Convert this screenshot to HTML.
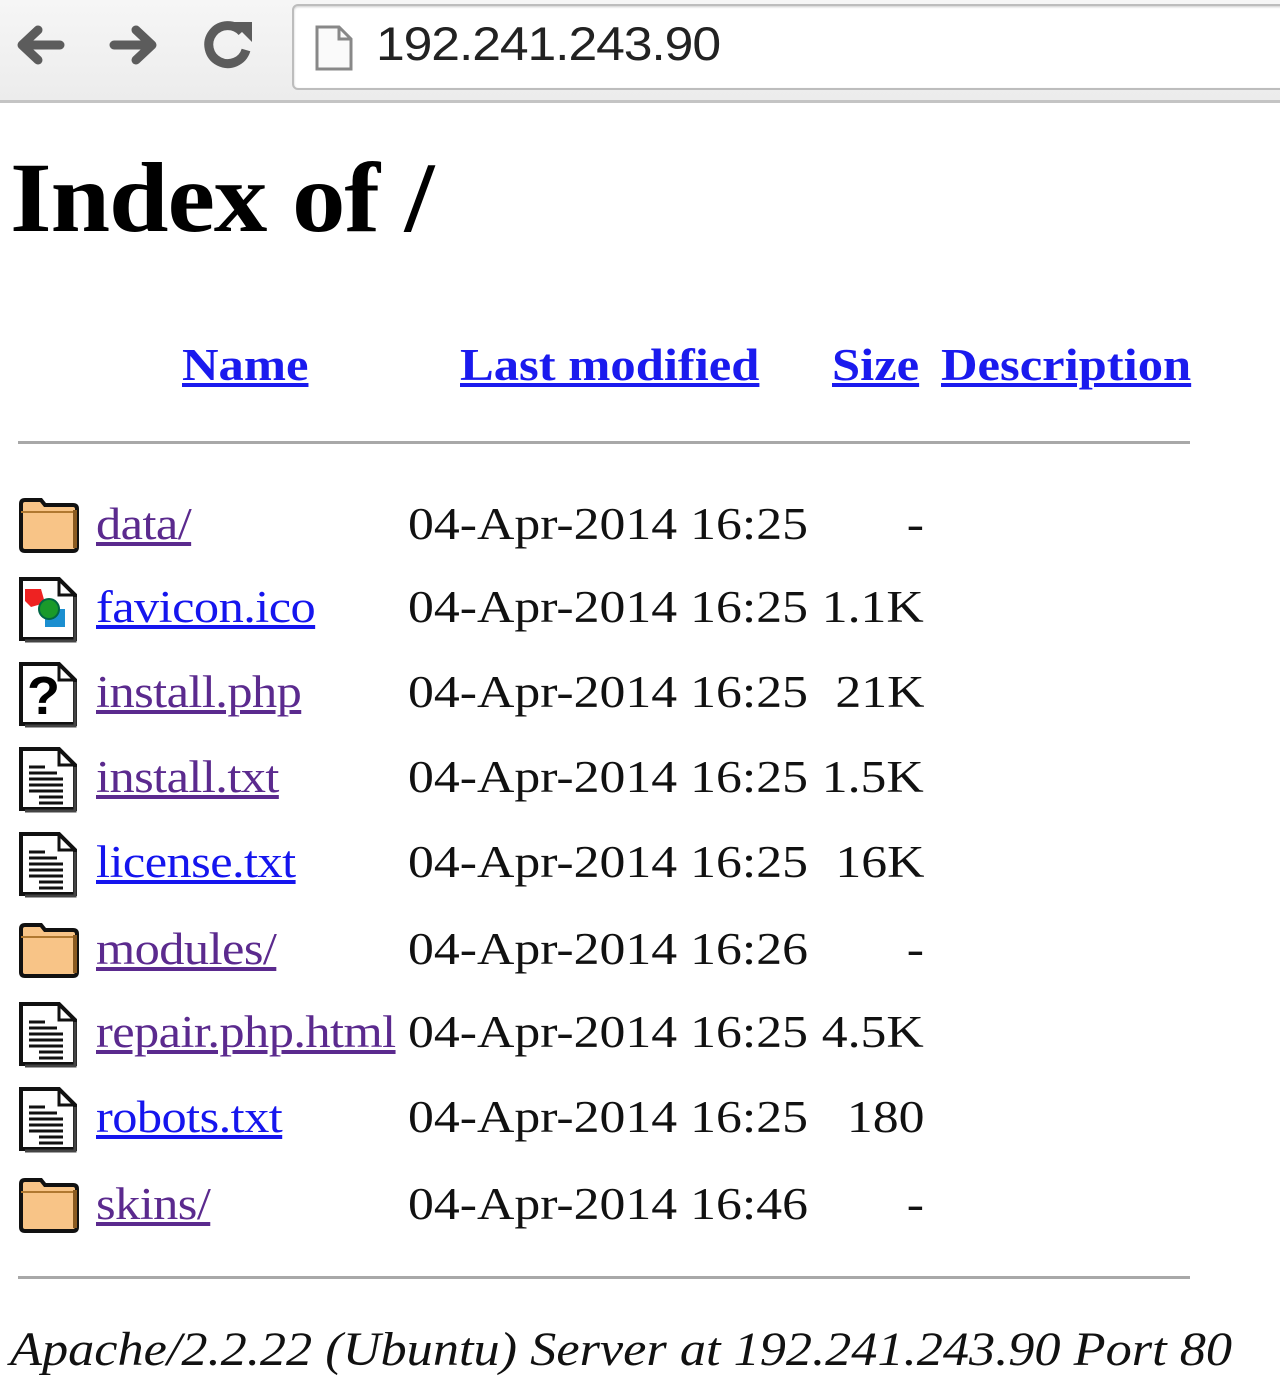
<!DOCTYPE html>
<html><head><meta charset="utf-8"><style>
html,body{margin:0;padding:0;background:#fff;width:1280px;height:1397px;overflow:hidden;position:relative}
.bar{position:absolute;left:0;top:0;width:1280px;height:100px;background:linear-gradient(#f6f6f6,#ececec);border-bottom:3px solid #c4c4c4}
.url{position:absolute;left:292px;top:4px;width:1010px;height:82px;background:#fff;border:2px solid #bdbdbd;border-radius:6px;box-shadow:inset 0 1px 2px #ccc}
.urltxt{position:absolute;left:376px;top:16px;font:47px "Liberation Sans",sans-serif;color:#222;letter-spacing:-1px;transform-origin:0 0;transform:scaleX(1.1)}
.t{position:absolute;font-family:"Liberation Serif",serif;white-space:nowrap;transform-origin:0 0}
h1{position:absolute;left:10px;top:140px;margin:0;font:bold 100px "Liberation Serif",serif;letter-spacing:-1px;transform-origin:0 0;transform:scaleX(1.07)}
.hd{font-weight:bold;font-size:46px;color:#1a1aee;text-decoration:underline;top:338px;transform:scaleX(1.1)}
.hr{position:absolute;left:18px;width:1172px;height:3px;background:#a8a8a8}
.row{position:absolute;left:0;height:80px;width:1000px}
.row svg{position:absolute;left:17px;top:0}
.nm{position:absolute;left:96px;top:4px;font:45px "Liberation Serif",serif;text-decoration:underline;white-space:nowrap;letter-spacing:-0.5px;transform-origin:0 0;transform:scaleX(1.12)}
.v{color:#5b2a8e}.u{color:#1515ee}
.dt{position:absolute;left:408px;top:4px;font:45px "Liberation Serif",serif;color:#111;white-space:nowrap;transform-origin:0 0;transform:scaleX(1.15)}
.sz{position:absolute;right:76px;top:4px;font:45px "Liberation Serif",serif;color:#111;text-align:right;transform-origin:100% 0;transform:scaleX(1.15)}
.ft{left:10px;top:1322px;font-style:italic;font-size:48px;color:#111;transform:scaleX(1.09)}
</style></head><body>
<div class="bar">
<svg style="position:absolute;left:14px;top:22px" width="52" height="46" viewBox="0 0 52 46"><path d="M46 23H10M24 8L8 23l16 15" fill="none" stroke="#5c5c5c" stroke-width="9" stroke-linecap="round" stroke-linejoin="round"/></svg>
<svg style="position:absolute;left:108px;top:22px" width="52" height="46" viewBox="0 0 52 46"><path d="M6 23h36M28 8l16 15-16 15" fill="none" stroke="#5c5c5c" stroke-width="9" stroke-linecap="round" stroke-linejoin="round"/></svg>
<svg style="position:absolute;left:202px;top:16px" width="54" height="56" viewBox="0 0 54 56"><path d="M40 16A19 19 0 1 0 44 34" fill="none" stroke="#5c5c5c" stroke-width="9"/><path d="M30 6h20v20z" fill="#5c5c5c"/></svg>
<div class="url"></div>
<svg style="position:absolute;left:314px;top:24px" width="40" height="48" viewBox="0 0 40 48"><path d="M3 3h22l12 12v30H3z" fill="#fafafa" stroke="#888" stroke-width="3"/><path d="M25 3v12h12" fill="none" stroke="#888" stroke-width="3"/></svg>
<div class="urltxt">192.241.243.90</div>
</div>
<h1>Index of /</h1>
<div class="t hd" style="left:182px">Name</div>
<div class="t hd" style="left:460px">Last modified</div>
<div class="t hd" style="left:832px">Size</div>
<div class="t hd" style="left:941px">Description</div>
<div class="hr" style="top:441px"></div>

<svg width="0" height="0" style="position:absolute">
<defs>
<g id="fold"><path d="M4 10q0-4 4-4h16l4 5h28q4 0 4 4v38q0 4-4 4H8q-4 0-4-4z" fill="#f8c487" stroke="#111" stroke-width="4"/><path d="M4 18h56" stroke="#b07830" stroke-width="2"/><path d="M58 16v38" stroke="#8a5a20" stroke-width="4"/></g>
<g id="doc"><path d="M4 2h38l16 16v44H4z" fill="#fff" stroke="#111" stroke-width="4"/><path d="M42 2v16h16" fill="none" stroke="#111" stroke-width="3"/><path d="M58 20v44H8" fill="none" stroke="#444" stroke-width="3"/></g>
<g id="txt"><use href="#doc"/><path d="M12 20h16M12 26h28M12 32h34M12 38h34M12 44h34M22 50h24M22 56h24" stroke="#111" stroke-width="3"/></g>
</defs></svg>

<div class="row" style="top:494px"><svg width="64" height="66"><use href="#fold"/></svg><a class="nm v">data/</a><span class="dt">04-Apr-2014 16:25</span><span class="sz">-</span></div>
<div class="row" style="top:577px"><svg width="64" height="68"><use href="#doc"/><path d="M8 12h16l4 14-14 4-6-6z" fill="#e22"/><rect x="28" y="32" width="20" height="18" fill="#1b8fd0"/><circle cx="32" cy="32" r="10" fill="#1a9a2a" stroke="#064" stroke-width="2"/></svg><a class="nm u">favicon.ico</a><span class="dt">04-Apr-2014 16:25</span><span class="sz">1.1K</span></div>
<div class="row" style="top:662px"><svg width="64" height="68"><use href="#doc"/><text x="10" y="52" font-family="Liberation Sans,sans-serif" font-weight="bold" font-size="54">?</text></svg><a class="nm v">install.php</a><span class="dt">04-Apr-2014 16:25</span><span class="sz">21K</span></div>
<div class="row" style="top:747px"><svg width="64" height="68"><use href="#txt"/></svg><a class="nm v">install.txt</a><span class="dt">04-Apr-2014 16:25</span><span class="sz">1.5K</span></div>
<div class="row" style="top:832px"><svg width="64" height="68"><use href="#txt"/></svg><a class="nm u">license.txt</a><span class="dt">04-Apr-2014 16:25</span><span class="sz">16K</span></div>
<div class="row" style="top:919px"><svg width="64" height="66"><use href="#fold"/></svg><a class="nm v">modules/</a><span class="dt">04-Apr-2014 16:26</span><span class="sz">-</span></div>
<div class="row" style="top:1002px"><svg width="64" height="68"><use href="#txt"/></svg><a class="nm v">repair.php.html</a><span class="dt">04-Apr-2014 16:25</span><span class="sz">4.5K</span></div>
<div class="row" style="top:1087px"><svg width="64" height="68"><use href="#txt"/></svg><a class="nm u">robots.txt</a><span class="dt">04-Apr-2014 16:25</span><span class="sz">180</span></div>
<div class="row" style="top:1174px"><svg width="64" height="66"><use href="#fold"/></svg><a class="nm v">skins/</a><span class="dt">04-Apr-2014 16:46</span><span class="sz">-</span></div>

<div class="hr" style="top:1276px"></div>
<div class="t ft">Apache/2.2.22 (Ubuntu) Server at 192.241.243.90 Port 80</div>
</body></html>
